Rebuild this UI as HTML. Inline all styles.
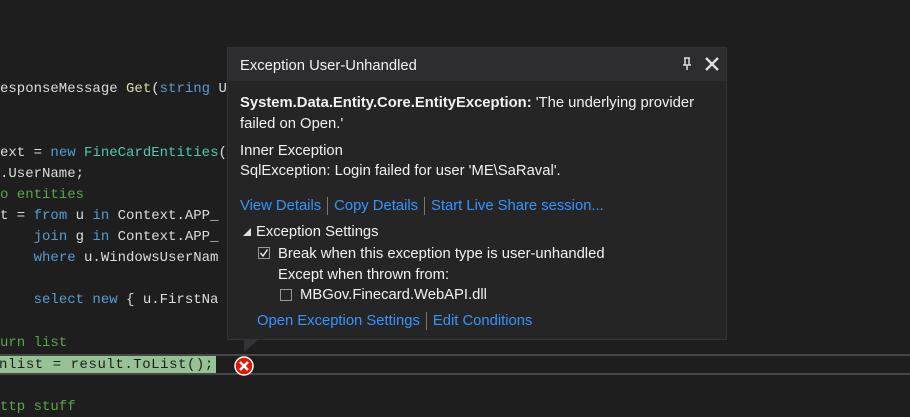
<!DOCTYPE html>
<html><head><meta charset="utf-8"><style>
html,body{margin:0;padding:0}
body{width:910px;height:417px;background:#1e1e1e;position:relative;overflow:hidden;font-family:"Liberation Sans",sans-serif}
.c{position:absolute;left:0;font-family:"Liberation Mono",monospace;font-size:14px;color:#dcdcdc;white-space:pre;line-height:20px}
.k{color:#569cd6}.t{color:#4ec9b0}.m{color:#dcdcaa}.g{color:#57a64a}.v{color:#9cdcfe}
#pop{position:absolute;left:227px;top:47px;width:500px;height:293px;background:#252526;border:1px solid #333337;box-sizing:border-box}
#hd{height:33px;background:#2d2d30;color:#f1f1f1;font-size:14.8px;line-height:36px;padding-left:12px}
.p{position:absolute;color:#f1f1f1;font-size:14.8px;white-space:nowrap;margin-top:2px}
.l{color:#3794ff}
.sep{display:inline-block;width:1px;height:18px;background:#777;vertical-align:middle;margin:0 6px}
.cb{position:absolute;width:12px;height:12px;border:1px solid #999;box-sizing:border-box;margin-top:1px}
</style></head><body>
<div class="c" style="top:79px">esponseMessage <span class="m">Get</span>(<span class="k">string</span> U</div>
<div class="c" style="top:143px">ext = <span class="k">new</span> <span class="t">FineCardEntities</span>(</div>
<div class="c" style="top:164px">.UserName;</div>
<div class="c g" style="top:185px">o entities</div>
<div class="c" style="top:206px">t = <span class="k">from</span> u <span class="k">in</span> Context.APP_</div>
<div class="c" style="top:227px">    <span class="k">join</span> g <span class="k">in</span> Context.APP_</div>
<div class="c" style="top:248px">    <span class="k">where</span> u.WindowsUserNam</div>
<div class="c" style="top:290px">    <span class="k">select new</span> { u.FirstNa</div>
<div class="c g" style="top:333px">urn list</div>
<div style="position:absolute;left:0;right:0;top:354px;height:2px;background:#464646"></div>
<div style="position:absolute;left:0;right:0;top:373px;height:2px;background:#464646"></div>
<div style="position:absolute;left:0;top:356px;width:216px;height:17px;background:#96c394"></div>
<div class="c" style="top:355px;left:-1px;color:#1e1e1e;letter-spacing:0.55px">nlist = result.ToList();</div>
<div class="c g" style="top:397px">ttp stuff</div>
<svg style="position:absolute;left:234px;top:356px" width="20" height="20" viewBox="0 0 20 20"><circle cx="10" cy="10" r="9" fill="#e51400" stroke="#fff" stroke-width="1.5"/><path d="M6 6L14 14M14 6L6 14" stroke="#fff" stroke-width="2.6"/></svg>
<svg style="position:absolute;left:244px;top:339px" width="16" height="14"><path d="M0 0H15L0 13Z" fill="#333337"/></svg>
<div id="pop">
<div id="hd">Exception User-Unhandled</div>
<svg style="position:absolute;left:453px;top:9px" width="12" height="14"><path d="M3 1H9M4 1V8H8V1M2 8H10M6 8V13" stroke="#ddd" stroke-width="1.5" fill="none"/></svg>
<svg style="position:absolute;left:477px;top:9px" width="14" height="14"><path d="M1 1L13 13M13 1L1 13" stroke="#ddd" stroke-width="2.4"/></svg>
<div class="p" style="left:12px;top:45px"><b>System.Data.Entity.Core.EntityException:</b> 'The underlying provider</div>
<div class="p" style="left:12px;top:66px">failed on Open.'</div>
<div class="p" style="left:12px;top:93px">Inner Exception</div>
<div class="p" style="left:12px;top:113px">SqlException: Login failed for user 'ME\SaRaval'.</div>
<div class="p" style="left:12px;top:147px"><span class="l">View Details</span><span class="sep"></span><span class="l">Copy Details</span><span class="sep"></span><span class="l">Start Live Share session...</span></div>
<svg style="position:absolute;left:15px;top:180px" width="8" height="8"><path d="M0 8H8V0Z" fill="#ddd"/></svg>
<div class="p" style="left:28px;top:174px">Exception Settings</div>
<div class="cb" style="left:30px;top:198px"></div>
<svg style="position:absolute;left:31px;top:200px" width="10" height="10"><path d="M1.5 5L4 8L8.5 1.5" stroke="#eee" stroke-width="1.4" fill="none"/></svg>
<div class="p" style="left:50px;top:196px">Break when this exception type is user-unhandled</div>
<div class="p" style="left:50px;top:217px">Except when thrown from:</div>
<div class="cb" style="left:52px;top:240px"></div>
<div class="p" style="left:72px;top:237px">MBGov.Finecard.WebAPI.dll</div>
<div class="p" style="left:29px;top:262px"><span class="l">Open Exception Settings</span><span class="sep"></span><span class="l">Edit Conditions</span></div>
</div>
</body></html>
